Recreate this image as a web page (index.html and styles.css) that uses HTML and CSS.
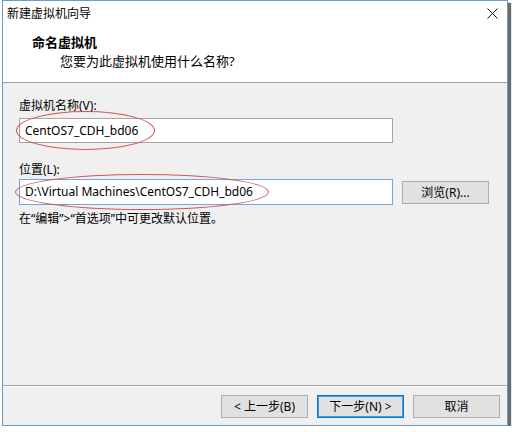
FILE: index.html
```html
<!DOCTYPE html>
<html lang="zh-CN">
<head>
<meta charset="utf-8">
<title>新建虚拟机向导</title>
<link rel="stylesheet" href="styles.css">
</head>
<body>
<div class="window">
  <div class="titlebar">
    <span class="title">新建虚拟机向导</span>
    <svg class="close" width="11" height="11" viewBox="0 0 11 11"><path d="M0.5 0.5 L10.5 10.5 M10.5 0.5 L0.5 10.5" stroke="#111" stroke-width="1" fill="none"/></svg>
  </div>
  <div class="header">
    <div class="h-title">命名虚拟机</div>
    <div class="h-sub">您要为此虚拟机使用什么名称?</div>
  </div>
  <div class="body">
    <div class="label">虚拟机名称(V):</div>
    <div class="row">
      <div class="input">CentOS7_CDH_bd06</div>
    </div>
    <div class="label label2">位置(L):</div>
    <div class="row row2">
      <div class="input focused">D:\Virtual Machines\CentOS7_CDH_bd06</div>
      <div class="btn browse">浏览(R)...</div>
    </div>
    <div class="hint">在“编辑”&gt;“首选项”中可更改默认位置。</div>
  </div>
  <div class="footer">
    <div class="btn">&lt; 上一步(B)</div>
    <div class="btn default">下一步(N) &gt;</div>
    <div class="btn">取消</div>
  </div>
  <div class="mark mark1"></div>
  <div class="mark mark2"></div>
</div>
</body>
</html>
```
FILE: styles.css
```css
html, body {
  margin: 0;
  padding: 0;
  background: #ffffff;
}
body {
  padding: 0 0 0 2px;
  font-family: "Noto Sans", "Noto Sans CJK SC", sans-serif;
  font-size: 12px;
  color: #000;
}
.window {
  position: relative;
  box-sizing: border-box;
  width: 506px;
  height: 426px;
  border: 1px solid #6a9bd1;
  background: #f0f0f0;
  box-shadow: 3px 3px 1px 0 #6b6b6b;
  display: flex;
  flex-direction: column;
}
.titlebar {
  height: 25px;
  background: #fff;
  display: flex;
  align-items: center;
  justify-content: space-between;
  padding: 0 9px 0 4px;
}
.title {
  line-height: 18px;
}
.close {
  display: block;
}
.header {
  background: #fff;
  padding: 7px 0 12px 29px;
  border-bottom: 1px solid #a0a0a0;
}
.h-title {
  font-weight: bold;
  font-size: 13px;
  line-height: 18px;
}
.h-sub {
  margin-top: 1px;
  padding-left: 28px;
  font-size: 13px;
  line-height: 18px;
}
.body {
  flex: 1;
  padding: 15px 0 0 16px;
}
.label {
  line-height: 16px;
}
.label2 {
  margin-top: 19px;
}
.row {
  display: flex;
  align-items: center;
  margin-top: 4px;
}
.row2 {
  margin-top: 1px;
}
.input {
  box-sizing: border-box;
  width: 374px;
  height: 25px;
  line-height: 23px;
  padding-left: 5px;
  background: #fff;
  border: 1px solid #a5a5a5;
  white-space: nowrap;
}
.input.focused {
  height: 26px;
  line-height: 24px;
  border-color: #6fa8dc;
}
.btn {
  box-sizing: border-box;
  width: 87px;
  height: 23px;
  line-height: 21px;
  text-align: center;
  background: #e1e1e1;
  border: 1px solid #adadad;
}
.browse {
  margin-left: 9px;
}
.hint {
  margin-top: 6px;
  line-height: 16px;
}
.footer {
  border-top: 1px solid #a0a0a0;
  box-shadow: inset 0 1px 0 #ffffff;
  padding: 9px 7px 7px 0;
  display: flex;
  justify-content: flex-end;
  gap: 9px;
}
.btn.default {
  border-color: #0078d7;
  box-shadow: inset 0 0 0 1px #4a9be0;
}
.mark {
  position: absolute;
  border: 1px solid rgba(205, 60, 60, 0.85);
  border-radius: 50%;
  pointer-events: none;
}
.mark1 {
  left: 13px;
  top: 110px;
  width: 137px;
  height: 37px;
}
.mark2 {
  left: 12px;
  top: 173px;
  width: 252px;
  height: 34px;
}
```
